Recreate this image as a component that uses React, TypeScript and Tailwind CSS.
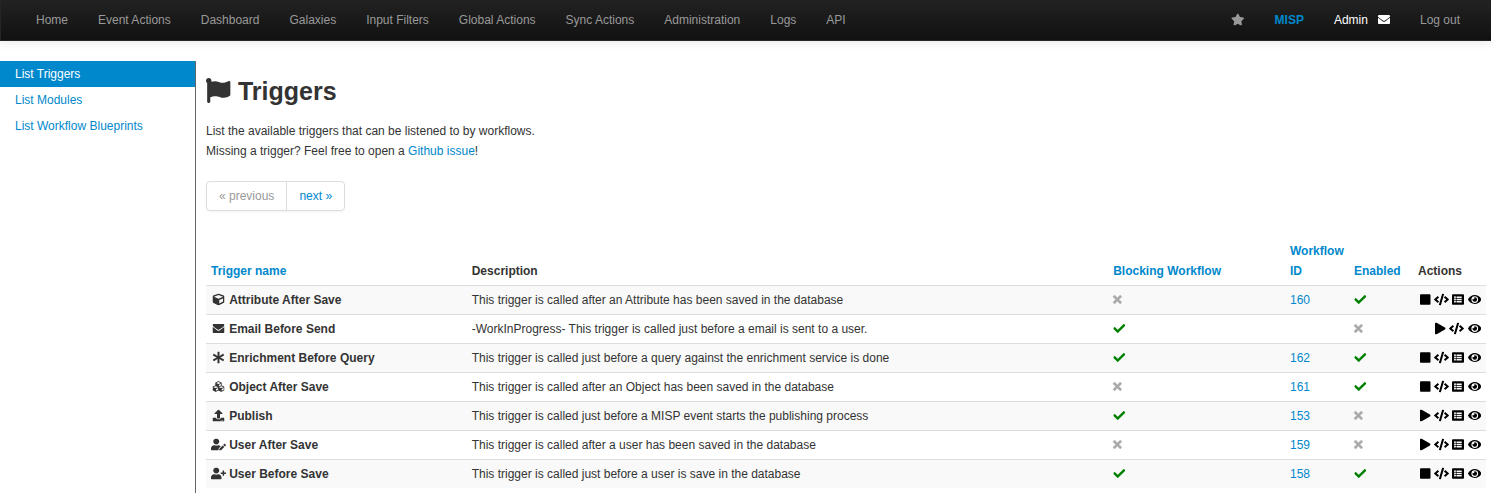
import React from 'react';
import type { IconType } from 'react-icons';
import {
  FaAsterisk,
  FaCheck,
  FaCode,
  FaCube,
  FaCubes,
  FaEnvelope,
  FaEye,
  FaFlag,
  FaListAlt,
  FaPlay,
  FaSquare,
  FaStar,
  FaTimes,
  FaUpload,
  FaUserEdit,
  FaUserPlus,
} from 'react-icons/fa';

const glyph = 'inline-block h-3 shrink-0 translate-y-[0.5px] align-[-1px]';

const menu = [
  'Home',
  'Event Actions',
  'Dashboard',
  'Galaxies',
  'Input Filters',
  'Global Actions',
  'Sync Actions',
  'Administration',
  'Logs',
  'API',
];

type Trigger = {
  icon: IconType;
  wide?: boolean;
  name: string;
  description: string;
  blocking: boolean;
  workflow?: number;
  enabled: boolean;
};

const triggers: Trigger[] = [
  { icon: FaCube, name: 'Attribute After Save', description: 'This trigger is called after an Attribute has been saved in the database', blocking: false, workflow: 160, enabled: true },
  { icon: FaEnvelope, name: 'Email Before Send', description: '-WorkInProgress- This trigger is called just before a email is sent to a user.', blocking: true, enabled: false },
  { icon: FaAsterisk, name: 'Enrichment Before Query', description: 'This trigger is called just before a query against the enrichment service is done', blocking: true, workflow: 162, enabled: true },
  { icon: FaCubes, name: 'Object After Save', description: 'This trigger is called after an Object has been saved in the database', blocking: false, workflow: 161, enabled: true },
  { icon: FaUpload, name: 'Publish', description: 'This trigger is called just before a MISP event starts the publishing process', blocking: true, workflow: 153, enabled: false },
  { icon: FaUserEdit, wide: true, name: 'User After Save', description: 'This trigger is called after a user has been saved in the database', blocking: false, workflow: 159, enabled: false },
  { icon: FaUserPlus, wide: true, name: 'User Before Save', description: 'This trigger is called just before a user is save in the database', blocking: true, workflow: 158, enabled: true },
];

function Flag({ on }: { on: boolean }) {
  return on ? (
    <FaCheck className={`${glyph} w-3 translate-x-[0.25px] text-[#008000]`} />
  ) : (
    <FaTimes className={`${glyph} w-[8.25px] translate-x-[0.25px] overflow-visible stroke-[#a9a9a9] stroke-[24px] text-[#a9a9a9]`} />
  );
}

function Navbar() {
  return (
    <nav className="flex h-[41px] shrink-0 justify-between border-b border-l border-[#252525] bg-linear-to-b from-[#222222] to-[#111111] pl-5 pr-4 leading-5 text-[#999999] shadow-[0_1px_10px_rgba(0,0,0,0.1)]">
      <ul className="flex">
        {menu.map((item) => (
          <li key={item} className="px-[15px] py-2.5">{item}</li>
        ))}
      </ul>
      <ul className="flex">
        <li className="px-[15px] py-2.5"><FaStar className={`${glyph} w-[13.5px]`} /></li>
        <li className="px-[15px] py-2.5 font-bold text-[#0088cc]">MISP</li>
        <li className="px-[15px] py-2.5 text-white">
          Admin<FaEnvelope className={`${glyph} ml-2.5 w-3`} />
        </li>
        <li className="px-[15px] py-2.5">Log out</li>
      </ul>
    </nav>
  );
}

function Sidebar() {
  return (
    <aside className="w-[196px] shrink-0 border-r border-[#666666] text-[#0088cc]">
      <div className="bg-[#0088cc] px-[15px] py-[3px] text-white">List Triggers</div>
      <div className="px-[15px] py-[3px]">List Modules</div>
      <div className="px-[15px] py-[3px]">List Workflow Blueprints</div>
    </aside>
  );
}

function TriggerTable() {
  return (
    <table className="w-[1280px] table-fixed border-separate border-spacing-0 text-left">
      <colgroup>
        <col className="w-[260.7px]" />
        <col className="w-[641.5px]" />
        <col className="w-[176.8px]" />
        <col className="w-[64px]" />
        <col className="w-[64px]" />
        <col className="w-[73px]" />
      </colgroup>
      <thead>
        <tr className="align-bottom text-[#0088cc] [&>th]:px-[5px] [&>th]:py-1">
          <th>Trigger name</th>
          <th className="text-[#333333]">Description</th>
          <th>Blocking Workflow</th>
          <th>Workflow ID</th>
          <th>Enabled</th>
          <th className="text-[#333333]">Actions</th>
        </tr>
      </thead>
      <tbody>
        {triggers.map(({ icon: Icon, ...t }) => (
          <tr key={t.name} className="odd:bg-[#f9f9f9] [&>td]:h-[29px] [&>td]:border-t [&>td]:border-[#dddddd] [&>td]:px-[5px] [&>td]:py-0">
            <td className="font-bold">
              <span className={t.wide ? 'mr-[3.2px]' : 'ml-px mr-[5.2px]'}>
                <Icon className={`${glyph} ${t.wide ? 'w-[15px]' : 'w-3 translate-x-[0.5px]'}`} />
              </span>
              {t.name}
            </td>
            <td>{t.description}</td>
            <td><Flag on={t.blocking} /></td>
            <td className="text-[#0088cc]">{t.workflow}</td>
            <td><Flag on={t.enabled} /></td>
            <td>
              <div className="flex items-center justify-end gap-[3.33px] pb-0.5 text-black">
                {t.enabled ? <FaSquare className={`${glyph} w-[10.5px]`} /> : <FaPlay className={`${glyph} w-[10.5px]`} />}
                <FaCode className={`${glyph} w-[15px]`} />
                {t.workflow && <FaListAlt className={`${glyph} w-3`} />}
                <FaEye className={`${glyph} w-[13.5px]`} />
              </div>
            </td>
          </tr>
        ))}
      </tbody>
    </table>
  );
}

export default function App() {
  return (
    <div className="flex h-[493px] flex-col overflow-hidden bg-white font-['Liberation_Sans',Arial,sans-serif] text-[12px] leading-5 text-[#333333]">
      <Navbar />
      <div className="flex grow pt-5">
        <Sidebar />
        <main className="pl-2.5 pt-2.5">
          <h1 className="text-[25px] font-bold leading-10">
            <FaFlag className="inline-block h-[25px] w-[25px] translate-x-[-0.4px] align-[-3px]" /> Triggers
          </h1>
          <p className="mt-2.5">
            List the available triggers that can be listened to by workflows.
            <br />
            Missing a trigger? Feel free to open a <a className="text-[#0088cc]">Github issue</a>!
          </p>
          <div className="mt-5 mb-[26px] inline-flex rounded-[4px] border border-[#dddddd] shadow-[0_1px_2px_rgba(0,0,0,0.05)]">
            <span className="border-r border-[#dddddd] px-3 py-1 text-[#999999]">« previous</span>
            <span className="px-3 py-1 text-[#0088cc]">next »</span>
          </div>
          <TriggerTable />
        </main>
      </div>
    </div>
  );
}
